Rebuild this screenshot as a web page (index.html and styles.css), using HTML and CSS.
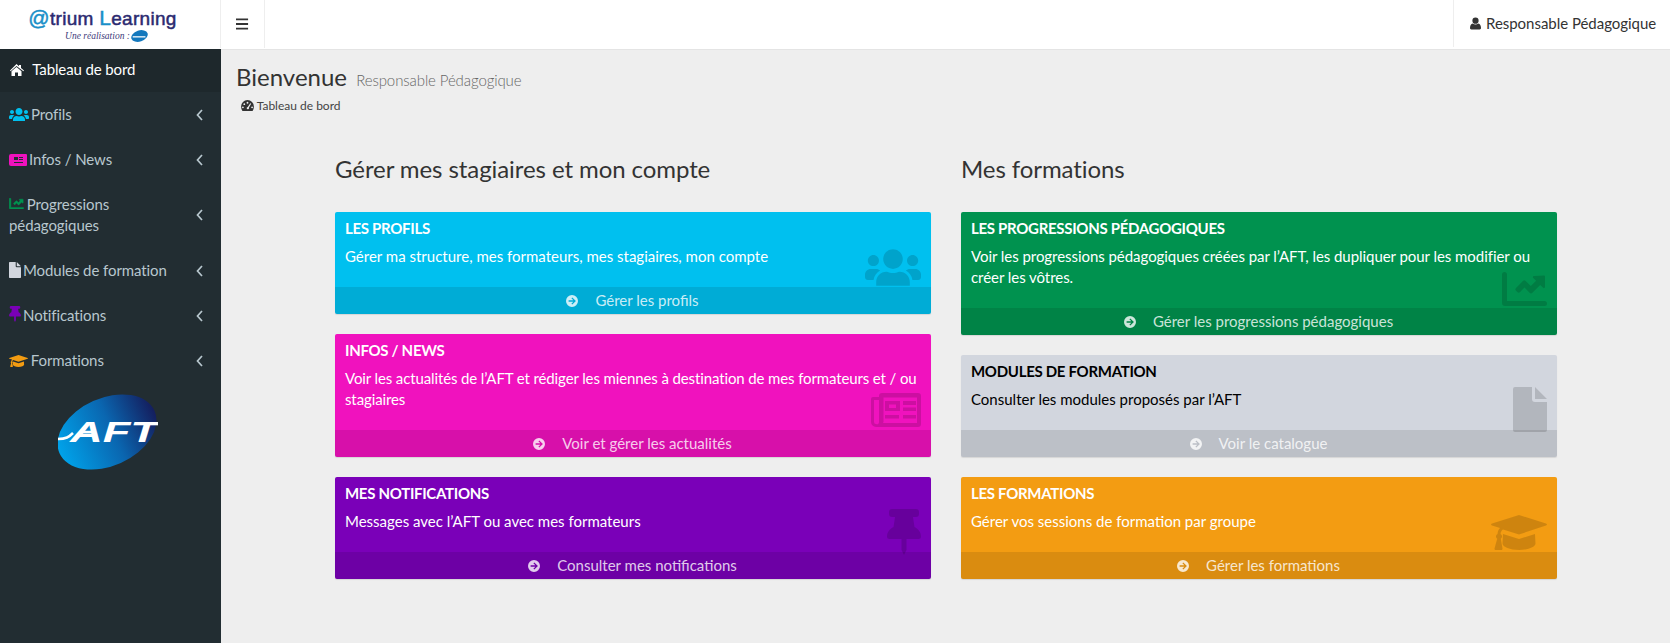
FILE: index.html
```html
<!DOCTYPE html>
<html lang="fr">
<head>
<meta charset="utf-8">
<title>Atrium Learning</title>
<link rel="stylesheet" href="styles.css">
</head>
<body>
<svg class="defs" aria-hidden="true">
  <defs>
    <symbol id="i-users" viewBox="0 32 640 416"><path d="M96 224c35.300 0 64-28.700 64-64s-28.700-64-64-64-64 28.700-64 64 28.700 64 64 64zm448 0c35.300 0 64-28.700 64-64s-28.700-64-64-64-64 28.700-64 64 28.700 64 64 64zm32 32h-64c-17.600 0-33.500 7.100-45.100 18.600 40.300 22.100 68.900 62 75.100 109.400h66c17.700 0 32-14.300 32-32v-32c0-35.300-28.700-64-64-64zm-256 0c61.900 0 112-50.100 112-112S381.900 32 320 32 208 82.100 208 144s50.100 112 112 112zm76.800 32h-8.300c-20.800 10-43.900 16-68.500 16s-47.600-6-68.500-16h-8.300C179.600 288 128 339.600 128 403.200V448h384v-44.800c0-63.600-51.600-115.200-115.200-115.200zm-223.700-13.400C161.500 263.100 145.600 256 128 256H64c-35.300 0-64 28.700-64 64v32c0 17.700 14.300 32 32 32h65.900c6.300-47.400 34.900-87.300 75.200-109.400z"/></symbol>
    <symbol id="i-news" viewBox="0 0 50 34"><path fill-rule="evenodd" d="M11 0h36a3 3 0 0 1 3 3v28a3 3 0 0 1-3 3H5a5 5 0 0 1-5-5V6a2 2 0 0 1 2-2h6V3a3 3 0 0 1 3-3zM3 7v22a2 2 0 0 0 2 2 2 2 0 0 0 3-2V7zM12.500 4.500V29a5 5 0 0 1-.5 1H46V4.500z"/><path fill-rule="evenodd" d="M14 8h15v10H14zM18 11.500v3.500h7v-3.500zM32 8h13v4H32zM32 14.500h13v3.500H32zM14 22h14v3.500H14zM32 22h13v3.500H32z"/></symbol>
    <symbol id="i-news-solid" viewBox="0 0 18 12"><path fill-rule="evenodd" d="M2 0h15a1 1 0 0 1 1 1v10a1 1 0 0 1-1 1H2a2 2 0 0 1-2-2V2a2 2 0 0 1 2-2zM5 3v3h4V3zM10 3v1h4V3zM10 5v1h4V5zM5 8v1h9V8z"/></symbol>
    <symbol id="i-chart" viewBox="0 0 45 34"><path d="M0 2.500a2.500 2.500 0 0 1 5 0V29h37.500a2.500 2.500 0 0 1 0 5H3a3 3 0 0 1-3-3z"/><path d="M42 3.500a1 1 0 0 1 1 1V15c0 1-1.200 1.500-1.900.800l-2.900-2.900-7.800 7.800a2 2 0 0 1-2.800 0l-5.100-5.100-4.400 4.400a2 2 0 0 1-2.800 0l-1.300-1.300a2 2 0 0 1 0-2.800l6.900-6.900a2 2 0 0 1 2.800 0l5.100 5.100 5.300-5.300-2.900-2.900c-.7-.7-.2-1.900.8-1.900z"/></symbol>
    <symbol id="i-file" viewBox="0 0 34 45"><path d="M2 0h17v12a3 3 0 0 0 3 3h12v28a2 2 0 0 1-2 2H2a2 2 0 0 1-2-2V2a2 2 0 0 1 2-2zM22 0l12 12H22z"/></symbol>
    <symbol id="i-pin" viewBox="0 0 34 46"><path d="M5 0h24a3 3 0 0 1 3 3v2a3 3 0 0 1-3 3h-3l1.500 10c4 2 6.500 5.500 6.500 9.500a2.500 2.500 0 0 1-2.500 2.500H19.500v11L17 46l-2.500-5V30H2.500A2.500 2.500 0 0 1 0 27.500C0 23.500 2.500 20 6.500 18L8 8H5a3 3 0 0 1-3-3V3a3 3 0 0 1 3-3z"/></symbol>
    <symbol id="i-cap" viewBox="0 0 56 35"><path d="M28 0l27 8.500c1.300.5 1.300 1.500 0 2L28 19.500 12 14.500c-1.500 1-2.300 2.500-2.500 4.500 1 .6 1.500 1.500 1.500 2.500s-.5 1.800-1.200 2.300L11.500 33.500c.1.800-.4 1.500-1.200 1.500H4.700c-.8 0-1.300-.7-1.200-1.500L6.200 23.800C5.500 23.300 5 22.500 5 21.500s.5-1.900 1.500-2.500c.2-2.500 1-4.600 2.500-6L1 10.500c-1.300-.5-1.300-1.500 0-2z"/><path d="M12 19l16 5 16-5 .5 9.500c0 3.500-7.500 6.500-16.500 6.500s-16.500-3-16.500-6.500z"/></symbol>
    <symbol id="i-go" viewBox="0 0 12 12"><path fill-rule="evenodd" d="M6 0a6 6 0 1 1 0 12A6 6 0 0 1 6 0zM6.300 2.400l-.9.900 1.900 1.900H2.600v1.600h4.700L5.400 8.700l.9.900L9.900 6z"/></symbol>
    <symbol id="i-chev" viewBox="0 0 7 12"><path d="M6 1 1.500 6 6 11" fill="none" stroke="currentColor" stroke-width="1.700"/></symbol>
  </defs>
</svg>

<header class="topbar">
  <div class="brand">
    <div class="brand-name"><span class="blue">@</span>trium <span class="blue">L</span>earning</div>
    <div class="brand-sub">Une réalisation :
      <svg class="mini-logo" viewBox="0 0 20 16"><ellipse cx="10" cy="8" rx="10" ry="6.500" transform="rotate(-18 10 8)" fill="#1378bd"/><path d="M2 9h15" stroke="#fff" stroke-width="1.500"/></svg>
    </div>
  </div>
  <button class="burger" aria-label="Menu">
    <svg viewBox="0 0 14 12" width="13" height="12"><path d="M0 0h13v2H0zM0 5h13v2H0zM0 10h13v2H0z" fill="#333"/></svg>
  </button>
  <div class="user">
    <svg viewBox="0 0 12 13" width="11" height="13"><circle cx="6" cy="3.400" r="3.400" fill="#333"/><path d="M1.500 13C.5 13 0 12.400 0 11.400 0 9 1 6.800 3 6.400c.8.700 1.900 1.100 3 1.100s2.200-.4 3-1.100c2 .4 3 2.600 3 5 0 1-.5 1.600-1.500 1.600z" fill="#333"/></svg>
    <span>Responsable Pédagogique</span>
  </div>
</header>

<div class="shell">
  <aside class="sidebar">
    <a class="nav-item active">
      <span class="nav-label">
        <svg class="ni ni-home" viewBox="0 0 15 12"><path d="M7.500 0l2.500 2.200V1h2v3l3 2.500-.6.800L7.500 2 1.600 7.300 1 6.500zM2.500 7.300 7.500 3l5 4.300V12H9V8.500H6V12H2.500z" fill="#fff"/></svg>
        Tableau de bord
      </span>
    </a>
    <a class="nav-item">
      <span class="nav-label"><svg class="ni ni-users c-cyan"><use href="#i-users"/></svg>Profils</span>
      <svg class="chev"><use href="#i-chev"/></svg>
    </a>
    <a class="nav-item">
      <span class="nav-label"><svg class="ni ni-news c-mag"><use href="#i-news-solid"/></svg>Infos / News</span>
      <svg class="chev"><use href="#i-chev"/></svg>
    </a>
    <a class="nav-item">
      <span class="nav-label"><svg class="ni ni-chart c-green"><use href="#i-chart"/></svg> Progressions pédagogiques</span>
      <svg class="chev"><use href="#i-chev"/></svg>
    </a>
    <a class="nav-item">
      <span class="nav-label"><svg class="ni ni-file c-grey"><use href="#i-file"/></svg>Modules de formation</span>
      <svg class="chev"><use href="#i-chev"/></svg>
    </a>
    <a class="nav-item">
      <span class="nav-label"><svg class="ni ni-pin c-purple"><use href="#i-pin"/></svg>Notifications</span>
      <svg class="chev"><use href="#i-chev"/></svg>
    </a>
    <a class="nav-item">
      <span class="nav-label"><svg class="ni ni-cap c-orange"><use href="#i-cap"/></svg> Formations</span>
      <svg class="chev"><use href="#i-chev"/></svg>
    </a>
    <div class="aft">
      <svg viewBox="0 0 100 78" width="100" height="78">
        <defs><linearGradient id="aftg" x1="0" x2="1" y1="0.500" y2="0.500"><stop offset="0" stop-color="#00a3ea"/><stop offset="0.550" stop-color="#0a66b0"/><stop offset="1" stop-color="#141e5e"/></linearGradient></defs>
        <ellipse cx="49" cy="39" rx="52" ry="34" transform="rotate(-24 49 39)" fill="url(#aftg)"/>
        <path d="M0 46c8 0 11-2 15-6M22 39h14" fill="none" stroke="#fff" stroke-width="2.500"/>
        <text class="aft-text" x="12" y="49" textLength="88" lengthAdjust="spacingAndGlyphs">AFT</text>
      </svg>
    </div>
  </aside>

  <main class="content">
    <div class="page-head">
      <h1>Bienvenue <small>Responsable Pédagogique</small></h1>
      <div class="crumb">
        <svg viewBox="0 0 14 12" width="13" height="11"><path fill-rule="evenodd" d="M7 0a7 7 0 0 1 7 7c0 1.800-.5 3.500-1.500 5h-11A9 9 0 0 1 0 7a7 7 0 0 1 7-7zM7 2a1 1 0 1 0 0 2 1 1 0 0 0 0-2zM3.500 3.500a1 1 0 1 0 0 2 1 1 0 0 0 0-2zM2 7a1 1 0 1 0 0 2 1 1 0 0 0 0-2zM12 7a1 1 0 1 0 0 2 1 1 0 0 0 0-2zM10 3.500L7.300 7.500a1.300 1.300 0 1 0 1.300.8L11 4.200z" fill="#333"/></svg>
        Tableau de bord
      </div>
    </div>

    <div class="columns">
      <section class="col">
        <h2>Gérer mes stagiaires et mon compte</h2>
        <article class="card bg-cyan">
          <div class="card-body"><h3>Les profils</h3><p>Gérer ma structure, mes formateurs, mes stagiaires, mon compte</p></div>
          <svg class="bg-icon bi-users"><use href="#i-users"/></svg>
          <a class="card-foot"><svg class="go"><use href="#i-go"/></svg>Gérer les profils</a>
        </article>
        <article class="card bg-mag">
          <div class="card-body"><h3>Infos / News</h3><p class="tight">Voir les actualités de l’AFT et rédiger les miennes à destination de mes formateurs et / ou stagiaires</p></div>
          <svg class="bg-icon bi-news"><use href="#i-news"/></svg>
          <a class="card-foot"><svg class="go"><use href="#i-go"/></svg>Voir et gérer les actualités</a>
        </article>
        <article class="card bg-purple">
          <div class="card-body"><h3>Mes notifications</h3><p>Messages avec l’AFT ou avec mes formateurs</p></div>
          <svg class="bg-icon bi-pin"><use href="#i-pin"/></svg>
          <a class="card-foot"><svg class="go"><use href="#i-go"/></svg>Consulter mes notifications</a>
        </article>
      </section>

      <section class="col">
        <h2>Mes formations</h2>
        <article class="card bg-green">
          <div class="card-body"><h3>Les progressions pédagogiques</h3><p class="snug">Voir les progressions pédagogiques créées par l’AFT, les dupliquer pour les modifier ou créer les vôtres.</p></div>
          <svg class="bg-icon bi-chart"><use href="#i-chart"/></svg>
          <a class="card-foot"><svg class="go"><use href="#i-go"/></svg>Gérer les progressions pédagogiques</a>
        </article>
        <article class="card bg-grey">
          <div class="card-body"><h3>Modules de formation</h3><p>Consulter les modules proposés par l’AFT</p></div>
          <svg class="bg-icon bi-file"><use href="#i-file"/></svg>
          <a class="card-foot"><svg class="go"><use href="#i-go"/></svg>Voir le catalogue</a>
        </article>
        <article class="card bg-orange">
          <div class="card-body"><h3>Les formations</h3><p>Gérer vos sessions de formation par groupe</p></div>
          <svg class="bg-icon bi-cap"><use href="#i-cap"/></svg>
          <a class="card-foot"><svg class="go"><use href="#i-go"/></svg>Gérer les formations</a>
        </article>
      </section>
    </div>
  </main>
</div>
</body>
</html>
```

FILE: styles.css
```css
* { box-sizing: border-box; }
html, body { margin: 0; height: 100%; }
body {
  font-family: Lato, "Liberation Sans", sans-serif;
  font-size: 15px;
  line-height: 21px;
  color: #333;
  background: #eee;
  overflow: hidden;
  display: flex;
  flex-direction: column;
}
.defs { width: 0; height: 0; position: absolute; }

.topbar {
  height: 49px;
  flex: none;
  background: #fff;
  display: flex;
  align-items: flex-start;
}
.brand {
  width: 221px;
  height: 48px;
  border-right: 1px solid #eee;
  display: flex;
  flex-direction: column;
  align-items: center;
  padding: 8px 15px 0 0;
}
.brand-name {
  font-family: "Liberation Sans", Arial, sans-serif;
  font-size: 19px;
  line-height: 20px;
  letter-spacing: .3px;
  color: #2b2a70;
  -webkit-text-stroke: .5px currentColor;
  white-space: nowrap;
}
.blue { color: #1a8fc8; font-size: 21px; }
.brand-sub {
  font-family: "Liberation Serif", serif;
  font-style: italic;
  font-size: 9.500px;
  line-height: 14px;
  color: #3d3a7a;
  display: flex;
  align-items: center;
  gap: 1px;
  margin-left: 8px;
  margin-top: 0;
}
.mini-logo { width: 17px; height: 14px; }
.burger {
  width: 44px;
  height: 48px;
  border: 0;
  border-right: 1px solid #eee;
  background: none;
  padding: 0;
  display: flex;
  align-items: center;
  justify-content: center;
}
.user {
  margin-left: auto;
  width: 217px;
  height: 47px;
  border-left: 1px solid #eee;
  display: flex;
  align-items: center;
  gap: 5px;
  padding-left: 16px;
  color: #333;
  white-space: nowrap;
  letter-spacing: -.03px;
}

.shell { flex: 1; display: flex; min-height: 0; }
.sidebar {
  width: 221px;
  flex: none;
  background: #222d32;
  color: #b8c7ce;
}
.nav-item {
  display: flex;
  align-items: center;
  padding: 12px 18px 12px 9px;
}
.nav-item.active {
  background: #1e282c;
  color: #fff;
  height: 43px;
  padding-top: 0;
  padding-bottom: 2px;
}
.nav-item.active .nav-label { letter-spacing: -.12px; }
.nav-label { flex: 1; display: block; letter-spacing: -.08px; }
.ni { fill: currentColor; display: inline-block; vertical-align: -1px; margin-right: 2px; }
.ni-home { width: 15px; height: 12px; margin-right: 5px; }
.ni-users { width: 20px; height: 13px; }
.ni-news { width: 18px; height: 12px; }
.ni-chart { width: 15px; height: 11px; margin-right: -1px; vertical-align: 1px; stroke: currentColor; stroke-width: 1.500px; }
.ni-file { width: 12px; height: 16px; vertical-align: -2px; }
.ni-pin { width: 12px; height: 16px; vertical-align: -1px; }
.ni-cap { width: 19px; height: 12px; margin-right: -1px; }
.chev { width: 7px; height: 12px; flex: none; color: #b8c7ce; }
.c-cyan { color: #00c0ef; }
.c-mag { color: #f012be; }
.c-green { color: #00924f; }
.c-grey { color: #d2d6de; }
.c-purple { color: #7a00b8; }
.c-orange { color: #f39c12; }
.aft { display: flex; justify-content: center; padding-top: 10px; margin-left: -5px; }
.aft-text {
  font-family: "Liberation Sans", Arial, sans-serif;
  font-style: italic;
  font-weight: 700;
  font-size: 30px;
  fill: #fff;
}

.content { flex: 1; min-width: 0; border-top: 1px solid #e4e4e4; }
.page-head { padding: 14px 15px 0; }
h1 {
  margin: 0;
  font-size: 24px;
  font-weight: 400;
  line-height: 26px;
  color: #333;
}
h1 small { font-size: 15px; font-weight: 300; color: #666; margin-left: 3px; letter-spacing: -.1px; }
.crumb {
  font-size: 12px;
  line-height: 17px;
  margin-top: 4px;
  padding-left: 5px;
  color: #444;
}
.crumb svg { vertical-align: -1px; }
.columns {
  width: 1222px;
  margin: 42px auto 0;
  display: grid;
  grid-template-columns: 596px 596px;
  gap: 30px;
}
.col { min-width: 0; }
h2 {
  margin: 0 0 30px;
  padding-left: .5px;
  font-size: 24px;
  font-weight: 400;
  line-height: 26px;
  letter-spacing: -.08px;
  color: #333;
}
.card {
  position: relative;
  border-radius: 2px;
  margin-bottom: 20px;
  color: #fff;
  box-shadow: 0 1px 1px rgba(0,0,0,.1);
  overflow: hidden;
}
.card-body { padding: 10px 10px 10px 10.500px; }
h3 {
  margin: 0 0 11px;
  font-size: 15px;
  line-height: 13px;
  font-weight: 700;
  text-transform: uppercase;
  letter-spacing: -.3px;
}
.card-body p { margin: 0 0 10px; }
.card-body p.tight { letter-spacing: -.12px; }
.card-body p.snug { letter-spacing: -.05px; }
.bg-icon { position: absolute; right: 10px; fill: rgba(0,0,0,.15); }
.bi-users { width: 56px; height: 41px; top: 35px; }
.bi-news { width: 50px; height: 34px; top: 59px; }
.bi-pin { width: 34px; height: 46px; top: 32px; }
.bi-chart { width: 45px; height: 34px; top: 60px; }
.bi-file { width: 34px; height: 45px; top: 32px; }
.bi-cap { width: 56px; height: 35px; top: 38px; }
.card-foot {
  display: flex;
  justify-content: center;
  align-items: center;
  gap: 17px;
  height: 27px;
  background: rgba(0,0,0,.1);
  color: rgba(255,255,255,.8);
}
.go { width: 12px; height: 12px; fill: currentColor; flex: none; }
.bg-cyan { background: #00c0ef; }
.bg-mag { background: #f012be; }
.bg-purple { background: #7a00b8; }
.bg-green { background: #00924f; }
.bg-grey { background: #d2d6de; color: #000; }
.bg-orange { background: #f39c12; }
```
